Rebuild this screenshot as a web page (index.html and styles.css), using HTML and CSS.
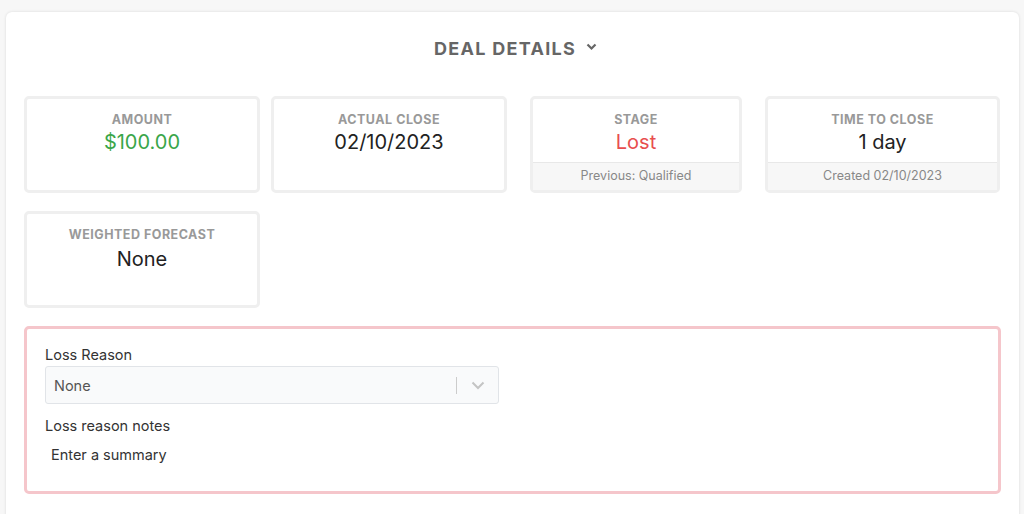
FILE: index.html
```html
<!DOCTYPE html>
<html>
<head>
<meta charset="utf-8">
<link rel="stylesheet" href="styles.css">
</head>
<body>
<div class="card">
  <div class="title">
    <span>DEAL DETAILS</span>
    <svg class="title-chev" width="11" height="8" viewBox="0 0 11 8"><path d="M1.5 1.5 L5.5 5.5 L9.5 1.5" fill="none" stroke="#666" stroke-width="2.2"/></svg>
  </div>
  <div class="tiles">
    <div class="group group-a">
      <div class="tile w236">
        <div class="tile-body">
          <div class="label">AMOUNT</div>
          <div class="value green">$100.00</div>
        </div>
      </div>
      <div class="tile w236">
        <div class="tile-body">
          <div class="label">ACTUAL CLOSE</div>
          <div class="value">02/10/2023</div>
        </div>
      </div>
    </div>
    <div class="group group-b">
      <div class="tile w212">
        <div class="tile-body">
          <div class="label">STAGE</div>
          <div class="value red">Lost</div>
        </div>
        <div class="tile-foot">Previous: Qualified</div>
      </div>
      <div class="tile w235">
        <div class="tile-body">
          <div class="label">TIME TO CLOSE</div>
          <div class="value">1 day</div>
        </div>
        <div class="tile-foot">Created 02/10/2023</div>
      </div>
    </div>
  </div>
  <div class="tiles row2">
    <div class="tile w236">
      <div class="tile-body">
        <div class="label">WEIGHTED FORECAST</div>
        <div class="value value-lg">None</div>
      </div>
    </div>
  </div>
  <div class="loss">
    <div class="field-label">Loss Reason</div>
    <div class="select">
      <span class="select-value">None</span>
      <span class="select-sep"></span>
      <svg class="select-chev" width="14" height="9" viewBox="0 0 14 9"><path d="M1.5 1.5 L7 7 L12.5 1.5" fill="none" stroke="#c4c4c4" stroke-width="2"/></svg>
    </div>
    <div class="field-label notes-label">Loss reason notes</div>
    <div class="summary">Enter a summary</div>
  </div>
</div>
</body>
</html>
```

FILE: styles.css
```css
html, body {
  margin: 0;
  padding: 0;
}
body {
  background: #f7f7f7;
  font-family: Inter, Lato, Arial, sans-serif;
  color: #333;
  width: 1024px;
  height: 514px;
  overflow: hidden;
}
.card {
  margin: 12px 5px 0 6px;
  background: #fff;
  border-radius: 6px;
  box-shadow: 0 0 3px rgba(0,0,0,0.12);
  padding: 0 18px 30px 18px;
  height: 520px;
  box-sizing: border-box;
}
.title {
  display: flex;
  justify-content: center;
  align-items: center;
  gap: 10px;
  padding-top: 24px;
  padding-left: 6px;
  height: 24px;
  font-size: 18px;
  font-weight: 700;
  color: #666;
  letter-spacing: 1.3px;
}
.title-chev {
  margin-top: -2px;
}
.tiles {
  display: flex;
  gap: 23px;
  margin-top: 36px;
}
.row2 {
  margin-top: 18px;
}
.group {
  display: flex;
}
.group-a { gap: 11px; }
.group-b { gap: 23px; }
.tile {
  border: 3px solid #efefef;
  border-radius: 5px;
  height: 97px;
  box-sizing: border-box;
  display: flex;
  flex-direction: column;
  text-align: center;
}
.w236 { width: 236px; }
.w212 { width: 212px; }
.w235 { width: 235px; }
.tile-body {
  flex: 1;
  padding-top: 13px;
}
.label {
  font-size: 12.5px;
  font-weight: 700;
  color: #999;
  line-height: 16px;
  letter-spacing: 0.5px;
}
.value {
  font-size: 20px;
  line-height: 28px;
  margin-top: 0;
  color: #222;
}
.value-lg {
  margin-top: 2px;
}
.green { color: #3aa64a; }
.red { color: #e84e4e; }
.tile-foot {
  height: 27px;
  background: #f7f7f7;
  border-top: 1px solid #e8e8e8;
  font-size: 12.5px;
  color: #888;
  line-height: 26px;
}
.loss {
  margin-top: 18px;
  border: 3px solid #f5c6cb;
  border-radius: 5px;
  height: 168px;
  box-sizing: border-box;
  padding: 17px 18px 0 18px;
}
.field-label {
  font-size: 14.5px;
  line-height: 18px;
  color: #333;
}
.select {
  margin-top: 2px;
  width: 454px;
  height: 38px;
  box-sizing: border-box;
  border: 1px solid #e1e4e8;
  border-radius: 3px;
  background: #f9fafb;
  display: flex;
  align-items: center;
  padding: 0 0 0 8px;
}
.select-value {
  flex: 1;
  font-size: 14.5px;
  color: #555;
}
.select-sep {
  width: 1px;
  height: 17px;
  background: #ccc;
}
.select-chev {
  margin: 1px 13px 0 14px;
}
.notes-label {
  margin-top: 13px;
}
.summary {
  margin-top: 11px;
  padding-left: 6px;
  font-size: 14.5px;
  line-height: 18px;
  color: #333;
}
```
